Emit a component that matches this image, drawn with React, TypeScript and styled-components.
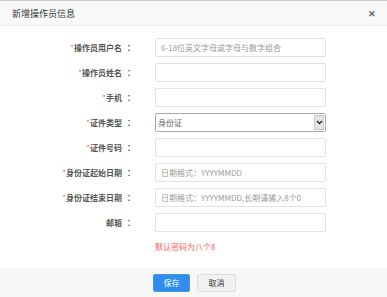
import React from "react";
import styled, { createGlobalStyle } from "styled-components";

const GlobalStyle = createGlobalStyle`
  html, body {
    margin: 0;
    padding: 0;
    background: #fff;
  }
  body {
    font-family: "Noto Sans CJK SC", "Liberation Sans", sans-serif;
    color: #333;
  }
`;

interface FieldDef {
  label: string;
  required?: boolean;
  placeholder?: string;
  select?: string;
}

const fields: FieldDef[] = [
  { label: "操作员用户名", required: true, placeholder: "6-18位英文字母或字母与数字组合" },
  { label: "操作员姓名", required: true },
  { label: "手机", required: true },
  { label: "证件类型", required: true, select: "身份证" },
  { label: "证件号码", required: true },
  { label: "身份证起始日期", required: true, placeholder: "日期格式：YYYYMMDD" },
  { label: "身份证结束日期", required: true, placeholder: "日期格式：YYYYMMDD,长期请输入8个0" },
  { label: "邮箱" },
];

const App = () => {
  return (
    <>
      <GlobalStyle />
      <Dialog>
        <Header>
          <Title>新增操作员信息</Title>
          <Close>✕</Close>
        </Header>
        <Form>
          {fields.map((f) => (
            <Row key={f.label}>
              <Label>
                {f.required && <Star>*</Star>}
                {f.label}
                <Colon>：</Colon>
              </Label>
              {f.select ? (
                <FakeSelect>
                  <span>{f.select}</span>
                  <Arrow>
                    <svg width="7" height="5" viewBox="0 0 7 5">
                      <path d="M1 1 L3.5 3.5 L6 1" fill="none" stroke="#222" strokeWidth="1.3" />
                    </svg>
                  </Arrow>
                </FakeSelect>
              ) : (
                <Input placeholder={f.placeholder} />
              )}
            </Row>
          ))}
          <Row>
            <span />
            <Note>默认密码为八个8</Note>
          </Row>
        </Form>
        <Footer>
          <Button $primary>保存</Button>
          <Button>取消</Button>
        </Footer>
      </Dialog>
    </>
  );
};

export default App;

const Dialog = styled.div`
  width: 387px;
  height: 297px;
  display: flex;
  flex-direction: column;
  border-top: 1px solid #c8c8c8;
  box-sizing: border-box;
`;

const Header = styled.div`
  height: 24px;
  flex-shrink: 0;
  display: flex;
  align-items: center;
  justify-content: space-between;
  padding: 0 11px 0 12px;
  background: #f8f8f8;
  border-bottom: 1px solid #eee;
`;

const Title = styled.div`
  font-size: 9px;
  color: #333;
`;

const Close = styled.div`
  font-size: 9px;
  font-weight: bold;
  color: #666;
`;

const Form = styled.div`
  flex: 1;
  display: flex;
  flex-direction: column;
  gap: 6px;
  padding-top: 12px;
`;

const Row = styled.div`
  display: grid;
  grid-template-columns: 133px 171px;
  column-gap: 22px;
  align-items: center;
`;

const Label = styled.div`
  text-align: right;
  font-size: 8px;
  font-weight: bold;
  color: #555;
`;

const Colon = styled.span`
  display: inline-block;
  width: 8px;
  margin-left: 3px;
  text-align: center;
  font-family: "Noto Sans CJK TC", "Noto Sans CJK SC", sans-serif;
`;

const Star = styled.span`
  color: #f66;
  font-weight: normal;
`;

const Input = styled.input`
  box-sizing: border-box;
  height: 19px;
  width: 171px;
  border: 1px solid #e2e2e2;
  border-radius: 2px;
  padding: 0 5px;
  font-family: inherit;
  font-size: 8px;
  outline: none;
  &::placeholder {
    color: #999;
  }
`;

const FakeSelect = styled.div`
  box-sizing: border-box;
  height: 19px;
  width: 171px;
  border: 1px solid #a9a9a9;
  border-radius: 2px;
  display: flex;
  align-items: center;
  justify-content: space-between;
  padding-left: 2px;
  font-size: 8px;
  color: #666;
`;

const Arrow = styled.div`
  width: 10px;
  height: 15px;
  margin-right: 1px;
  background: #e4e4e4;
  border: 1px solid #c8c8c8;
  box-sizing: border-box;
  display: flex;
  align-items: center;
  justify-content: center;
`;

const Note = styled.div`
  font-size: 8px;
  color: #ff5a5a;
  margin-top: 3px;
`;

const Footer = styled.div`
  height: 29px;
  flex-shrink: 0;
  display: flex;
  align-items: center;
  gap: 7px;
  padding-left: 153px;
  background: #f7f7f7;
`;

const Button = styled.div<{ $primary?: boolean }>`
  box-sizing: border-box;
  height: 18px;
  width: ${(p) => (p.$primary ? "37px" : "39px")};
  display: flex;
  align-items: center;
  justify-content: center;
  font-size: 8px;
  border-radius: 2px;
  color: ${(p) => (p.$primary ? "#fff" : "#333")};
  background: ${(p) => (p.$primary ? "#2e8ded" : "#f1f1f1")};
  border: 1px solid ${(p) => (p.$primary ? "#4898d5" : "#dedede")};
`;
